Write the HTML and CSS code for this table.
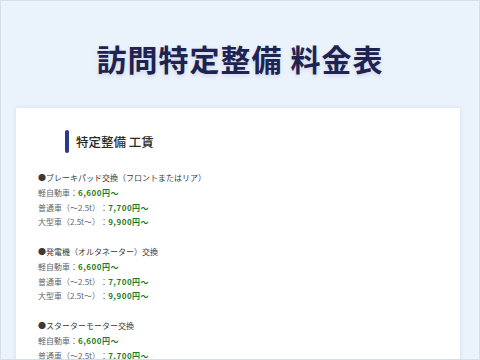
FILE: index.html
```html
<!DOCTYPE html>
<html lang="ja">
<head>
<meta charset="utf-8">
<title>訪問特定整備 料金表</title>
<link rel="stylesheet" href="styles.css">
</head>
<body>
<div class="frame">
  <header class="hero">
    <h1 class="title">訪問特定整備 料金表</h1>
  </header>
  <main class="card">
    <h2 class="section-title"><span class="bar"></span>特定整備 工賃</h2>
    <div class="list">
      <div class="group">
        <p class="item">●ブレーキパッド交換（フロントまたはリア）</p>
        <p class="row">軽自動車：<b class="price">6,600円〜</b></p>
        <p class="row">普通車（〜2.5t）：<b class="price">7,700円〜</b></p>
        <p class="row">大型車（2.5t〜）：<b class="price">9,900円〜</b></p>
      </div>
      <div class="group">
        <p class="item">●発電機（オルタネーター）交換</p>
        <p class="row">軽自動車：<b class="price">6,600円〜</b></p>
        <p class="row">普通車（〜2.5t）：<b class="price">7,700円〜</b></p>
        <p class="row">大型車（2.5t〜）：<b class="price">9,900円〜</b></p>
      </div>
      <div class="group">
        <p class="item">●スターターモーター交換</p>
        <p class="row">軽自動車：<b class="price">6,600円〜</b></p>
        <p class="row">普通車（〜2.5t）：<b class="price">7,700円〜</b></p>
        <p class="row">大型車（2.5t〜）：<b class="price">9,900円〜</b></p>
      </div>
    </div>
  </main>
</div>
</body>
</html>
```
FILE: styles.css
```css
html, body {
  margin: 0;
  padding: 0;
}
body {
  width: 480px;
  height: 360px;
  overflow: hidden;
  background: #eaf2fb;
  font-family: "Noto Sans CJK JP", "Noto Sans", sans-serif;
  text-spacing-trim: space-all;
}
.frame {
  box-sizing: border-box;
  width: 480px;
  height: 360px;
  border: 1px solid #d6dde5;
  overflow: hidden;
}
.hero {
  padding-top: 41px;
  height: 66px;
}
.title {
  margin: 0;
  text-align: center;
  font-size: 30px;
  line-height: 32px;
  font-weight: 700;
  color: #1e2352;
  letter-spacing: 1px;
  text-shadow: 0 2px 4px rgba(30, 35, 82, 0.12);
}
.card {
  margin-left: 15px;
  width: 444px;
  background: #fff;
  box-shadow: 0 0 4px rgba(120, 140, 170, 0.18);
  padding-top: 21px;
  padding-bottom: 40px;
}
.section-title {
  margin: 0 0 0 49px;
  display: flex;
  align-items: center;
  gap: 7px;
  font-size: 12.5px;
  line-height: 25px;
  font-weight: 500;
  color: #2a2a2a;
}
.bar {
  display: block;
  width: 4px;
  height: 23px;
  border-radius: 2px;
  background: #2c3790;
}
.list {
  padding-left: 22px;
  padding-top: 17px;
}
.group {
  margin-bottom: 14.8px;
}
.item, .row {
  margin: 0;
  font-size: 8px;
  line-height: 14.8px;
  color: #3a3a3a;
}
.row {
  color: #666;
}
.price {
  color: #1f7d1f;
  font-weight: 700;
  letter-spacing: 0.5px;
}
```
